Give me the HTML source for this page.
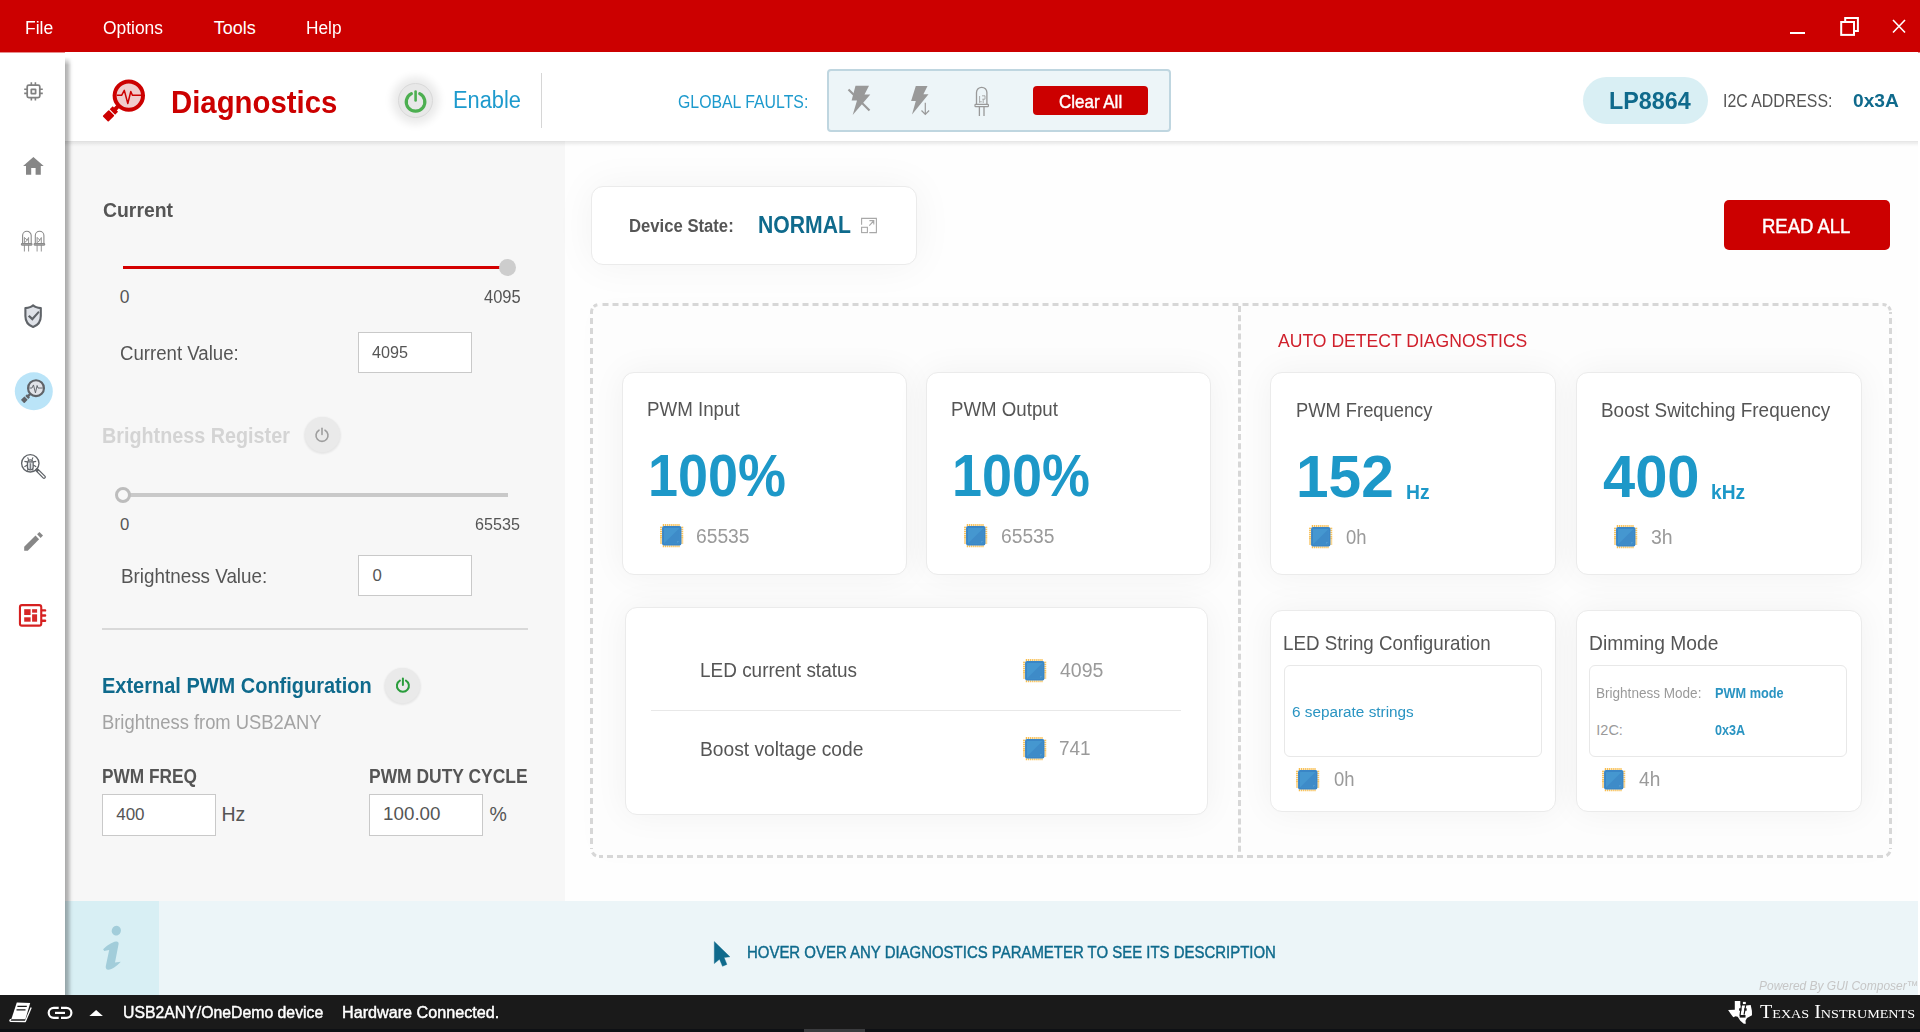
<!DOCTYPE html>
<html><head><meta charset="utf-8">
<title>Diagnostics</title>
<style>
html,body{margin:0;padding:0;width:1920px;height:1032px;overflow:hidden;background:#fff;font-family:"Liberation Sans",sans-serif;}
.a{position:absolute;box-sizing:border-box;}
.t{position:absolute;white-space:nowrap;transform-origin:0 0;font-family:"Liberation Sans",sans-serif;}
svg{position:absolute;overflow:visible;}
.card{position:absolute;box-sizing:border-box;background:#fff;border:1px solid #ebebeb;border-radius:12px;box-shadow:0 0 34px rgba(0,0,0,0.05);}
.inp{position:absolute;box-sizing:border-box;background:#fff;border:1px solid #c9c9c9;}
</style></head><body>
<!-- menu bar -->
<div class="a" style="left:0;top:0;width:1920px;height:52px;background:#cc0000"></div>
<div class="a" style="left:0;top:52px;width:1920px;height:1px;background:rgba(204,0,0,0.45)"></div>
<!-- window controls -->
<div class="a" style="left:1790px;top:32px;width:15px;height:2px;background:#fff"></div>
<svg style="left:0;top:0" width="1920" height="52">
 <path d="M1845.2 21V18.1H1857.9V30.9H1855" fill="none" stroke="#fff" stroke-width="2"/>
 <rect x="1841.2" y="22" width="12.8" height="12.9" fill="none" stroke="#fff" stroke-width="2"/>
 <path d="M1893 20L1905 32.5M1905 20L1893 32.5" stroke="#fff" stroke-width="1.6"/>
</svg>

<!-- header -->
<div class="a" style="left:65px;top:52px;width:1853px;height:89px;background:#fff"></div>
<!-- left panel -->
<div class="a" style="left:65px;top:141px;width:500px;height:760px;background:#f7f7f7"></div>
<!-- main area -->
<div class="a" style="left:565px;top:141px;width:1353px;height:760px;background:#fefefe"></div>
<!-- header shadow -->
<div class="a" style="left:65px;top:141px;width:1853px;height:7px;background:linear-gradient(rgba(0,0,0,.09) 0.5px,rgba(0,0,0,.065) 1.5px,rgba(0,0,0,.053) 2.5px,rgba(0,0,0,.033) 3.5px,rgba(0,0,0,.016) 4.5px,rgba(0,0,0,.004) 5.5px,rgba(0,0,0,0) 6.5px)"></div>

<!-- info bar -->
<div class="a" style="left:65px;top:901px;width:1853px;height:94px;background:#ecf5f8"></div>
<div class="a" style="left:65px;top:901px;width:94px;height:94px;background:#d8eff4"></div>
<svg style="left:0;top:0" width="200" height="1000">
 <ellipse cx="116.3" cy="930.7" rx="4.6" ry="4.9" transform="rotate(20 116.3 930.7)" fill="#a2cdda"/>
 <path d="M103.1 949.3C107 945.5 112 942 116 941.5C118 941.3 118.8 942.5 118.6 944L115 962.5L120.8 961.8C117 966 112 969.5 108.5 969.7C106 969.8 105.5 968 105.8 966L109.2 950C107.5 950.3 105.5 950.7 104.3 951Z" fill="#a2cdda"/>
</svg>
<!-- cursor -->
<svg style="left:0;top:0" width="800" height="1000">
 <path d="M714.3 941.6V963.6L719.5 959.2L722.5 966.3L726.9 964.4L724.1 957.6L729.9 956.8Z" fill="#0f6a8c" stroke="#0f6a8c" stroke-width="0.4" stroke-linejoin="round"/>
</svg>


<svg width="0" height="0" style="position:absolute">
 <defs>
  <symbol id="chip" viewBox="0 0 24 24">
   <path d="M3.4 0V2.4M3.4 21.6V24M0 3.4H2.4M21.6 3.4H24M5.4 0V2.4M5.4 21.6V24M0 5.4H2.4M21.6 5.4H24M7.4 0V2.4M7.4 21.6V24M0 7.4H2.4M21.6 7.4H24M9.4 0V2.4M9.4 21.6V24M0 9.4H2.4M21.6 9.4H24M11.4 0V2.4M11.4 21.6V24M0 11.4H2.4M21.6 11.4H24M13.4 0V2.4M13.4 21.6V24M0 13.4H2.4M21.6 13.4H24M15.4 0V2.4M15.4 21.6V24M0 15.4H2.4M21.6 15.4H24M17.4 0V2.4M17.4 21.6V24M0 17.4H2.4M21.6 17.4H24M19.4 0V2.4M19.4 21.6V24M0 19.4H2.4M21.6 19.4H24" stroke="#f6b02a" stroke-width="1.05"/>
   <rect x="2.1" y="2.1" width="19.8" height="19.8" rx="2" fill="#3a86c6"/>
   <rect x="4" y="4" width="16" height="16" rx="0.6" fill="#4597d0"/>
   <path d="M20 4V19.4Q20 20 19.4 20H4Z" fill="#3e8bc8"/>
   <path d="M17.6 18.6Q18.6 18.6 18.6 17.4" stroke="#6fb3de" stroke-width="0.6" fill="none"/>
  </symbol>
 </defs>
</svg>

<!-- ===== HEADER ===== -->
<!-- diagnostics icon -->
<svg style="left:0;top:0" width="200" height="140">
 <circle cx="128.8" cy="95.6" r="14.2" fill="#f0cccc" stroke="#cc0000" stroke-width="4"/>
 <path d="M116.7 95.3H121.6L124.3 90.4L127.8 103.5L130.8 91.5L132.4 95.3H141" fill="none" stroke="#cc0000" stroke-width="1.5" stroke-linejoin="round"/>
 <g transform="translate(128.8 95.6) rotate(135)" fill="#cc0000">
  <rect x="15" y="-2" width="5" height="4"/>
  <rect x="19" y="-3.8" width="4.2" height="7.6"/>
  <rect x="24.3" y="-4" width="8.8" height="8" rx="0.8"/>
 </g>
</svg>
<!-- enable power button -->
<div class="a" style="left:398px;top:83px;width:35px;height:35px;border-radius:50%;background:#e8e8e8;border:1px solid #d9d9d9;box-shadow:0 0 8px 6px rgba(0,0,0,0.085)"></div>
<svg style="left:0;top:0" width="600" height="140">
 <path d="M411.4 93.6A9.3 9.3 0 1 0 419.7 93.6" fill="none" stroke="#4caf50" stroke-width="3.2" stroke-linecap="round"/>
 <line x1="415.6" y1="91.5" x2="415.6" y2="100.5" stroke="#4caf50" stroke-width="2.6" stroke-linecap="round"/>
</svg>
<div class="a" style="left:540.5px;top:73px;width:1px;height:55px;background:#d6d6d6"></div>
<!-- faults box -->
<div class="a" style="left:827px;top:69px;width:344px;height:63px;border:2px solid #bfd6e0;border-radius:4px;background:#edf5f8"></div>
<svg style="left:0;top:0" width="1200" height="140">
 <path d="M855.5 85.8H869L864.5 94.5H870.3L852.7 115L857 100.5H851.6Z" fill="#999"/>
 <path d="M848.5 89.5L869.5 110.5" stroke="#999" stroke-width="2.1"/>
 <path d="M848.5 89.5L869.5 110.5" stroke="#edf5f8" stroke-width="0.01"/>
 <path d="M915.8 86H927.5L923.4 94.2H928.5L912 114.5L915.8 101H911.1Z" fill="#999"/>
 <path d="M925.3 102.8V114.3M921.5 110.5L925.3 114.3L929.1 110.5" fill="none" stroke="#999" stroke-width="1.2"/>
 <path d="M976.5 104.5V92.5A5.2 5.2 0 0 1 986.9 92.5V104.5" fill="none" stroke="#999" stroke-width="1.3"/>
 <rect x="975" y="104.4" width="13.4" height="2.3" rx="0.6" fill="none" stroke="#999" stroke-width="1.2"/>
 <path d="M979.4 106.5V116M984 106.5V116" stroke="#999" stroke-width="1.3"/>
 <path d="M979.6 96V102.8M979.6 101.8H981.8M982 95.8H985M985 95.8V99.2M985 99.2H982.4M983.2 99.2V103" fill="none" stroke="#999" stroke-width="0.8"/>
</svg>
<div class="a" style="left:1033px;top:86px;width:115px;height:29px;border-radius:4px;background:#cc0000"></div>
<!-- LP pill -->
<div class="a" style="left:1583px;top:77px;width:125px;height:47px;border-radius:24px;background:#d9eff4"></div>

<!-- ===== LEFT PANEL ===== -->
<div class="a" style="left:123px;top:266px;width:380px;height:3px;background:#d40000"></div>
<div class="a" style="left:499px;top:259px;width:17px;height:17px;border-radius:50%;background:#cdcdcd"></div>
<div class="inp" style="left:358px;top:332px;width:114px;height:41px"></div>
<!-- brightness power btn -->
<div class="a" style="left:304.5px;top:417px;width:35px;height:35px;border-radius:50%;background:#eaeaea;box-shadow:0 1px 2px 1px rgba(0,0,0,0.07)"></div>

<div class="a" style="left:123px;top:493px;width:385px;height:4px;background:#c9c9c9"></div>
<div class="a" style="left:114.8px;top:486.9px;width:16px;height:16px;border-radius:50%;background:#f7f7f7;border:3px solid #bdbdbd"></div>
<div class="inp" style="left:358px;top:555px;width:114px;height:41px"></div>
<div class="a" style="left:102px;top:628px;width:426px;height:2px;background:#d9d9d9"></div>
<div class="a" style="left:385.4px;top:667.7px;width:35px;height:35px;border-radius:50%;background:#eaeaea;box-shadow:0 1px 2px 1px rgba(0,0,0,0.07)"></div>
<svg style="left:0;top:0" width="600" height="900">
 <path d="M319 430.2A6 6 0 1 0 325 430.2" fill="none" stroke="#9e9e9e" stroke-width="1.6" stroke-linecap="round"/>
 <line x1="322" y1="428.2" x2="322" y2="434.5" stroke="#9e9e9e" stroke-width="1.6" stroke-linecap="round"/>
 <path d="M399.9 680.6A6 6 0 1 0 405.9 680.6" fill="none" stroke="#2a9d3c" stroke-width="2" stroke-linecap="round"/>
 <line x1="402.9" y1="678.6" x2="402.9" y2="685" stroke="#2a9d3c" stroke-width="2" stroke-linecap="round"/>
</svg>
<div class="inp" style="left:102px;top:794px;width:114px;height:42px"></div>
<div class="inp" style="left:369px;top:794px;width:114px;height:42px"></div>

<!-- ===== MAIN ===== -->
<div class="card" style="left:590.5px;top:186px;width:326px;height:79px;box-shadow:0 0 40px rgba(0,0,0,0.05)"></div>
<svg style="left:0;top:0" width="900" height="300">
 <path d="M861.6 224.7V218.4H876.4V232.6H869.3" fill="none" stroke="#a8a8a8" stroke-width="1.1"/>
 <rect x="861.6" y="227.3" width="5.8" height="5.3" fill="none" stroke="#a8a8a8" stroke-width="1.1"/>
 <path d="M869.3 225.6L873.6 221M869.4 220.6H873.8V224.6" fill="none" stroke="#a8a8a8" stroke-width="1.1"/>
</svg>
<div class="a" style="left:1724px;top:200px;width:166px;height:50px;border-radius:5px;background:#cc0000"></div>

<!-- dashed container -->
<div class="a" style="left:591px;top:304px;width:1300px;height:553px;border-radius:8px;background:#fdfdfd;box-shadow:0 0 30px rgba(0,0,0,0.012)"></div>
<svg style="left:0;top:0" width="1920" height="900">
 <g fill="none" stroke="#d7d7d7" stroke-width="3">
  <line x1="599" y1="304.5" x2="1883" y2="304.5" stroke-dasharray="6 4" stroke-dashoffset="-3.5"/>
  <line x1="599" y1="856.5" x2="1883" y2="856.5" stroke-dasharray="6 4" stroke-dashoffset="-8"/>
  <line x1="591.5" y1="312" x2="591.5" y2="849" stroke-dasharray="6 4" stroke-dashoffset="-6"/>
  <line x1="1890.5" y1="312" x2="1890.5" y2="849" stroke-dasharray="6 4" stroke-dashoffset="-6"/>
  <line x1="1239.5" y1="306" x2="1239.5" y2="857" stroke-dasharray="6 3.15"/>
  <path d="M591.5 312A7.5 7.5 0 0 1 599 304.5" stroke-dasharray="3.5 2.5 4 10"/>
  <path d="M1883 304.5A7.5 7.5 0 0 1 1890.5 312" stroke-dasharray="3.5 2.5 4 10"/>
  <path d="M1890.5 849A7.5 7.5 0 0 1 1883 856.5" stroke-dasharray="0 3 5 10"/>
  <path d="M599 856.5A7.5 7.5 0 0 1 591.5 849" stroke-dasharray="0 3 5 10"/>
 </g>
</svg>

<!-- cards -->
<div class="card" style="left:621.5px;top:371.5px;width:285px;height:203px"></div>
<div class="card" style="left:925.5px;top:371.5px;width:285.5px;height:203px"></div>
<div class="card" style="left:624.5px;top:606.5px;width:583px;height:208px"></div>
<div class="a" style="left:651px;top:710px;width:530px;height:1px;background:#e8e8e8"></div>
<div class="card" style="left:1269.5px;top:372px;width:286px;height:203px"></div>
<div class="card" style="left:1575.5px;top:372px;width:286px;height:203px"></div>
<div class="card" style="left:1269.5px;top:609.5px;width:286px;height:202.5px"></div>
<div class="card" style="left:1575.5px;top:609.5px;width:286px;height:202.5px"></div>
<div class="a" style="left:1284px;top:665px;width:258px;height:92px;border:1px solid #e8e8e8;border-radius:6px;background:#fff"></div>
<div class="a" style="left:1589px;top:665px;width:258px;height:92px;border:1px solid #e8e8e8;border-radius:6px;background:#fff"></div>

<!-- chip icons -->
<svg style="left:660px;top:524px" width="23.5" height="23.5"><use href="#chip"/></svg>
<svg style="left:964px;top:524px" width="23.5" height="23.5"><use href="#chip"/></svg>
<svg style="left:1023.3px;top:658.7px" width="23.5" height="23.5"><use href="#chip"/></svg>
<svg style="left:1023.3px;top:736.6px" width="23.5" height="23.5"><use href="#chip"/></svg>
<svg style="left:1309.2px;top:524.8px" width="23.5" height="23.5"><use href="#chip"/></svg>
<svg style="left:1614px;top:524.8px" width="23.5" height="23.5"><use href="#chip"/></svg>
<svg style="left:1296px;top:767.9px" width="23.5" height="23.5"><use href="#chip"/></svg>
<svg style="left:1602.3px;top:767.9px" width="23.5" height="23.5"><use href="#chip"/></svg>


<!-- ===== SIDEBAR ICONS ===== -->
<svg style="left:0;top:0" width="65" height="660">
 <!-- chip -->
 <g fill="none" stroke="#808080" stroke-width="1.75">
  <rect x="27.2" y="85.1" width="12.6" height="12.5" rx="1.6"/>
  <rect x="31.3" y="89.3" width="4.3" height="4.3" rx="0.3"/>
  <path d="M31.35 82.2V85M35.4 82.2V85M31.35 97.6V100.4M35.4 97.6V100.4M24.2 89.3H27.2M24.2 93.4H27.2M39.8 89.3H42.8M39.8 93.4H42.8" stroke-width="1.6"/>
 </g>
 <!-- home -->
 <path d="M31.2 174.8V168H35.6V174.8H40.8V166H43.7L33.4 157L23.1 166H26V174.8Z" fill="#868686"/>
 <!-- leds -->
 <g fill="none" stroke="#8a8a8a" stroke-width="1.1">
  <path d="M22.6 243.6V235.6A4.3 4.3 0 0 1 31.2 235.6V243.6"/>
  <rect x="21.4" y="243.6" width="10.6" height="1.5" rx="0.6" fill="#d6d6d6"/>
  <path d="M24.4 245V251.5M28.6 245V251.5M24.4 237.2V243.6M28.6 237.2V243.6M24.6 237.8L27.4 240.2L24.8 242.4M28.4 238L26.8 240.4" stroke-width="0.9"/>
  <path d="M35.3 243.6V235.6A4.3 4.3 0 0 1 43.9 235.6V243.6"/>
  <rect x="34.1" y="243.6" width="10.6" height="1.5" rx="0.6" fill="#d6d6d6"/>
  <path d="M37.1 245V251.5M41.3 245V251.5M37.1 237.2V243.6M41.3 237.2V243.6M37.3 237.8L40.1 240.2L37.5 242.4M41.1 238L39.5 240.4" stroke-width="0.9"/>
 </g>
 <!-- shield -->
 <path d="M33.1 305.3C31.5 307 28 307.9 25.4 308.1V316C25.4 321.5 28.8 325.5 33.1 327C37.4 325.5 40.8 321.5 40.8 316V308.1C38.2 307.9 34.7 307 33.1 305.3Z" fill="#dfe2e8" stroke="#5f6368" stroke-width="2.1" stroke-linejoin="round"/>
 <path d="M27.9 316.6L29.6 314.9L32.3 317.5L38.3 310.9L39.5 312.4L32.4 320.8Z" fill="#5f6368"/>
 <!-- active diag -->
 <circle cx="33.8" cy="391.3" r="19" fill="#bae4f8"/>
 <g transform="translate(36 388.2) scale(0.56) translate(-128.8 -95.6)">
  <circle cx="128.8" cy="95.6" r="14.2" fill="#e1e3e8" stroke="#5f6368" stroke-width="3.8"/>
  <path d="M116.7 95.3H121.6L124.3 89.8L127.8 104L130.8 90.8L132.4 95.3H141" fill="none" stroke="#5f6368" stroke-width="1.7" stroke-linejoin="round"/>
  <g transform="translate(128.8 95.6) rotate(135)" fill="#5f6368">
   <rect x="15" y="-2" width="5" height="4"/>
   <rect x="19" y="-3.8" width="4.2" height="7.6"/>
   <rect x="25" y="-4.2" width="8.8" height="8.4" rx="0.8"/>
  </g>
 </g>
 <!-- bug magnifier -->
 <g fill="none" stroke="#5f6368" stroke-width="1.2">
  <circle cx="30.3" cy="463.3" r="8.7" stroke-width="1.35"/>
  <path d="M37 470L44 477" stroke-width="3.8" stroke-linecap="round"/>
  <path d="M38.6 471.6L44 477" stroke="#fff" stroke-width="1.3" stroke-linecap="round"/>
  <path d="M27.4 461.8H33.2V467.3C33.2 468.9 32 469.9 30.3 469.9C28.6 469.9 27.4 468.9 27.4 467.3Z" fill="#dcdfe3"/>
  <path d="M28.1 461.3C28.1 459.4 32.5 459.4 32.5 461.3"/>
  <path d="M30.3 463.3V469.4" stroke-width="1"/>
  <path d="M27.4 461.9L24.4 461.4M33.2 461.9L36.2 461.4M27.4 465L24.4 466.8M33.2 465L36.2 466.8M28 469.2L27.4 470.8M32.6 469.2L33.2 470.8M28.6 459.8L27.6 457.4M32 459.8L33 457.4" stroke-width="1.1"/>
 </g>
 <!-- pencil -->
 <path d="M24.2 550.7V546.7L35.5 535.6L39.1 539.2L27.8 550.7Z" fill="#878787"/>
 <path d="M37.1 534.3L39.4 532L43 535.6L40.6 538Z" fill="#878787"/>
 <!-- red board -->
 <rect x="19.95" y="605.15" width="21.3" height="20.5" rx="2" fill="none" stroke="#d62020" stroke-width="2.1"/>
 <rect x="24.2" y="609.2" width="6.4" height="5.8" fill="#d62828"/>
 <rect x="24.2" y="617.3" width="6.4" height="4.4" fill="#d62828"/>
 <rect x="32.1" y="609.2" width="5" height="3.5" fill="#d62828"/>
 <rect x="32.1" y="614.3" width="5" height="7.4" fill="#d62828"/>
 <path d="M42 610.4H45.1M42 615.5H45.1M42 620.7H45.1" stroke="#d62020" stroke-width="2.4" stroke-linecap="round"/>
</svg>



<!-- sidebar shadow -->
<div class="a" style="left:65px;top:57px;width:10px;height:938px;background:linear-gradient(90deg,rgba(0,0,0,.30) 0.5px,rgba(0,0,0,.27) 1.5px,rgba(0,0,0,.25) 2.5px,rgba(0,0,0,.20) 3.5px,rgba(0,0,0,.14) 4.5px,rgba(0,0,0,.09) 5.5px,rgba(0,0,0,.035) 6.5px,rgba(0,0,0,.015) 7.5px,rgba(0,0,0,0) 9px);-webkit-mask-image:linear-gradient(rgba(0,0,0,0),#000 8px)"></div>

<!-- status bar -->
<div class="a" style="left:0;top:995px;width:1920px;height:37px;background:#1a1a1a"></div>
<div class="a" style="left:0;top:1029px;width:1920px;height:3px;background:#0e1014"></div>
<div class="a" style="left:804px;top:1029px;width:61px;height:3px;background:#3a3b3e"></div>
<!-- ===== STATUS BAR ICONS ===== -->
<svg style="left:0;top:0" width="120" height="1032">
 <path d="M16.8 1002.6L30.2 1002.9L25.4 1019.3L11.3 1019.3Z" fill="#fff"/>
 <path d="M11.3 1019.3C9.6 1019.6 9.5 1021.2 10.8 1021.3L25.3 1021.5L31.2 1007.6" fill="none" stroke="#fff" stroke-width="1.3" stroke-linejoin="round"/>
 <path d="M17.4 1006.3H26.8M16.5 1009.9H25.5" stroke="#1a1a1a" stroke-width="1.2"/>
 <path d="M58.7 1007.8H53.75A5.05 5.05 0 0 0 53.75 1017.9H58.7M61 1007.8H66.35A5.05 5.05 0 0 1 66.35 1017.9H61" fill="none" stroke="#fff" stroke-width="2.2"/>
 <path d="M55 1012.9H65" stroke="#fff" stroke-width="2.2"/>
 <path d="M89.4 1016.1L96.1 1009.9L102.9 1016.1Z" fill="#fff"/>
</svg>
<!-- TI logo -->
<svg style="left:0;top:0" width="1920" height="1032">
 <path d="M1734.8 1000.9H1740.3V1005.4L1746 1005.4L1750.7 1005.1L1751.9 1010.7L1752 1015.3L1747 1017.9L1745.5 1020.8L1745.8 1023.7L1743.8 1023.7L1740.3 1020.8L1737.7 1016.8L1735.6 1016.2L1733.3 1017.3L1731 1014.2L1728.1 1010.1L1734.8 1009.8Z" fill="#fff"/>
 <rect x="1742.9" y="1001.9" width="2.9" height="2.2" fill="#fff"/>
 <path d="M1741.5 1004.6L1740 1015.6M1745.7 1005.2L1744.1 1014.6" stroke="#1a1a1a" stroke-width="1.2"/>
 <rect x="1739.1" y="1008.3" width="2.3" height="2.4" fill="#1a1a1a"/>
 <rect x="1744.3" y="1008.3" width="2.4" height="2.4" fill="#1a1a1a"/>
 <rect x="1739.7" y="1015" width="5.8" height="2.6" fill="#1a1a1a"/>
</svg>
<span class="t" style="left:1760px;top:1003px;font-family:'Liberation Serif',serif;color:#fff;font-size:18.5px;line-height:18px;font-variant:small-caps;letter-spacing:0px;transform:scaleX(1.086);white-space:nowrap">Texas Instruments</span>

<span class="t" style="left:24.83px;top:18.86px;font-size:18.0px;line-height:18.0px;font-weight:400;color:#ffffff;transform:scaleX(0.9717);">File</span>
<span class="t" style="left:103.40px;top:18.86px;font-size:18.0px;line-height:18.0px;font-weight:400;color:#ffffff;transform:scaleX(0.9672);">Options</span>
<span class="t" style="left:213.70px;top:18.86px;font-size:18.0px;line-height:18.0px;font-weight:400;color:#ffffff;">Tools</span>
<span class="t" style="left:305.74px;top:18.86px;font-size:18.0px;line-height:18.0px;font-weight:400;color:#ffffff;transform:scaleX(0.9581);">Help</span>
<span class="t" style="left:170.71px;top:86.65px;font-size:31.0px;line-height:31.0px;font-weight:700;color:#cc0000;transform:scaleX(0.9463);">Diagnostics</span>
<span class="t" style="left:452.74px;top:88.44px;font-size:24.75px;line-height:24.75px;font-weight:400;color:#1d9acd;transform:scaleX(0.8815);">Enable</span>
<span class="t" style="left:677.50px;top:92.65px;font-size:18.25px;line-height:18.25px;font-weight:400;color:#1d9acd;transform:scaleX(0.8683);">GLOBAL FAULTS:</span>
<span class="t" style="left:1058.90px;top:91.71px;font-size:19.0px;line-height:19.0px;font-weight:400;color:#ffffff;-webkit-text-stroke:0.45px #ffffff;transform:scaleX(0.8927);">Clear All</span>
<span class="t" style="left:1608.72px;top:88.59px;font-size:23.75px;line-height:23.75px;font-weight:700;color:#0f6a8c;transform:scaleX(0.9822);">LP8864</span>
<span class="t" style="left:1723.14px;top:92.24px;font-size:18.5px;line-height:18.5px;font-weight:400;color:#555555;transform:scaleX(0.8586);">I2C ADDRESS:</span>
<span class="t" style="left:1852.50px;top:92.24px;font-size:18.5px;line-height:18.5px;font-weight:700;color:#0f6a8c;transform:scaleX(1.0372);">0x3A</span>
<span class="t" style="left:102.60px;top:200.07px;font-size:20.0px;line-height:20.0px;font-weight:700;color:#555555;transform:scaleX(0.9701);">Current</span>
<span class="t" style="left:119.80px;top:289.28px;font-size:17.5px;line-height:17.5px;font-weight:400;color:#555555;">0</span>
<span class="t" style="left:483.70px;top:289.28px;font-size:17.5px;line-height:17.5px;font-weight:400;color:#555555;transform:scaleX(0.9425);">4095</span>
<span class="t" style="left:120.47px;top:343.27px;font-size:20.0px;line-height:20.0px;font-weight:400;color:#555555;transform:scaleX(0.9318);">Current Value:</span>
<span class="t" style="left:372.30px;top:344.92px;font-size:16.75px;line-height:16.75px;font-weight:400;color:#555555;transform:scaleX(0.9663);">4095</span>
<span class="t" style="left:101.98px;top:425.90px;font-size:21.5px;line-height:21.5px;font-weight:700;color:#d4d4d4;transform:scaleX(0.9194);">Brightness Register</span>
<span class="t" style="left:120.00px;top:516.92px;font-size:16.75px;line-height:16.75px;font-weight:400;color:#555555;">0</span>
<span class="t" style="left:475.00px;top:516.92px;font-size:16.75px;line-height:16.75px;font-weight:400;color:#555555;transform:scaleX(0.9641);">65535</span>
<span class="t" style="left:120.70px;top:564.62px;font-size:21.0px;line-height:21.0px;font-weight:400;color:#555555;transform:scaleX(0.8970);">Brightness Value:</span>
<span class="t" style="left:372.40px;top:567.92px;font-size:16.75px;line-height:16.75px;font-weight:400;color:#555555;">0</span>
<span class="t" style="left:102.00px;top:675.36px;font-size:22.25px;line-height:22.25px;font-weight:700;color:#0f6a8c;transform:scaleX(0.8980);">External PWM Configuration</span>
<span class="t" style="left:101.96px;top:713.49px;font-size:19.5px;line-height:19.5px;font-weight:400;color:#a3a3a3;transform:scaleX(0.9423);">Brightness from USB2ANY</span>
<span class="t" style="left:102.03px;top:767.38px;font-size:19.75px;line-height:19.75px;font-weight:700;color:#555555;transform:scaleX(0.8736);">PWM FREQ</span>
<span class="t" style="left:369.12px;top:767.38px;font-size:19.75px;line-height:19.75px;font-weight:700;color:#555555;transform:scaleX(0.8827);">PWM DUTY CYCLE</span>
<span class="t" style="left:116.20px;top:805.61px;font-size:17.0px;line-height:17.0px;font-weight:400;color:#555555;">400</span>
<span class="t" style="left:221.40px;top:805.49px;font-size:19.5px;line-height:19.5px;font-weight:400;color:#555555;">Hz</span>
<span class="t" style="left:383.10px;top:805.22px;font-size:18.75px;line-height:18.75px;font-weight:400;color:#555555;">100.00</span>
<span class="t" style="left:489.60px;top:805.49px;font-size:19.5px;line-height:19.5px;font-weight:400;color:#555555;">%</span>
<span class="t" style="left:628.73px;top:215.70px;font-size:19.25px;line-height:19.25px;font-weight:700;color:#555555;transform:scaleX(0.8659);">Device State:</span>
<span class="t" style="left:757.74px;top:212.64px;font-size:24.75px;line-height:24.75px;font-weight:700;color:#0f6a8c;transform:scaleX(0.8559);">NORMAL</span>
<span class="t" style="left:1762.08px;top:215.87px;font-size:20.0px;line-height:20.0px;font-weight:400;color:#ffffff;-webkit-text-stroke:0.45px #ffffff;transform:scaleX(0.9238);">READ ALL</span>
<span class="t" style="left:647.38px;top:399.05px;font-size:20.25px;line-height:20.25px;font-weight:400;color:#555555;transform:scaleX(0.9244);">PWM Input</span>
<span class="t" style="left:648.46px;top:447.35px;font-size:59.0px;line-height:59.0px;font-weight:700;color:#1d98c8;transform:scaleX(0.9137);">100%</span>
<span class="t" style="left:695.94px;top:525.77px;font-size:20.0px;line-height:20.0px;font-weight:400;color:#9a9a9a;transform:scaleX(0.9616);">65535</span>
<span class="t" style="left:951.48px;top:399.05px;font-size:20.25px;line-height:20.25px;font-weight:400;color:#555555;transform:scaleX(0.9221);">PWM Output</span>
<span class="t" style="left:952.36px;top:447.35px;font-size:59.0px;line-height:59.0px;font-weight:700;color:#1d98c8;transform:scaleX(0.9137);">100%</span>
<span class="t" style="left:1000.54px;top:525.77px;font-size:20.0px;line-height:20.0px;font-weight:400;color:#9a9a9a;transform:scaleX(0.9616);">65535</span>
<span class="t" style="left:699.89px;top:660.03px;font-size:20.75px;line-height:20.75px;font-weight:400;color:#555555;transform:scaleX(0.9134);">LED current status</span>
<span class="t" style="left:1059.80px;top:660.03px;font-size:20.75px;line-height:20.75px;font-weight:400;color:#9a9a9a;transform:scaleX(0.9404);">4095</span>
<span class="t" style="left:699.87px;top:738.53px;font-size:20.75px;line-height:20.75px;font-weight:400;color:#555555;transform:scaleX(0.9259);">Boost voltage code</span>
<span class="t" style="left:1058.89px;top:737.83px;font-size:20.75px;line-height:20.75px;font-weight:400;color:#9a9a9a;transform:scaleX(0.9129);">741</span>
<span class="t" style="left:1277.80px;top:331.41px;font-size:19.0px;line-height:19.0px;font-weight:400;color:#d0202c;transform:scaleX(0.9249);">AUTO DETECT DIAGNOSTICS</span>
<span class="t" style="left:1296.20px;top:400.15px;font-size:20.25px;line-height:20.25px;font-weight:400;color:#555555;transform:scaleX(0.9047);">PWM Frequency</span>
<span class="t" style="left:1296.22px;top:448.35px;font-size:59.0px;line-height:59.0px;font-weight:700;color:#1d98c8;transform:scaleX(0.9933);">152</span>
<span class="t" style="left:1406.05px;top:481.55px;font-size:20.25px;line-height:20.25px;font-weight:700;color:#1d98c8;transform:scaleX(0.9524);">Hz</span>
<span class="t" style="left:1345.80px;top:528.28px;font-size:19.75px;line-height:19.75px;font-weight:400;color:#9a9a9a;transform:scaleX(0.9340);">0h</span>
<span class="t" style="left:1601.47px;top:400.05px;font-size:20.25px;line-height:20.25px;font-weight:400;color:#555555;transform:scaleX(0.9337);">Boost Switching Frequency</span>
<span class="t" style="left:1603.30px;top:448.35px;font-size:59.0px;line-height:59.0px;font-weight:700;color:#1d98c8;transform:scaleX(0.9801);">400</span>
<span class="t" style="left:1711.05px;top:481.95px;font-size:20.25px;line-height:20.25px;font-weight:700;color:#1d98c8;transform:scaleX(0.9459);">kHz</span>
<span class="t" style="left:1650.80px;top:528.28px;font-size:19.75px;line-height:19.75px;font-weight:400;color:#9a9a9a;transform:scaleX(0.9865);">3h</span>
<span class="t" style="left:1283.47px;top:633.35px;font-size:20.25px;line-height:20.25px;font-weight:400;color:#555555;transform:scaleX(0.9272);">LED String Configuration</span>
<span class="t" style="left:1292.30px;top:703.98px;font-size:15.5px;line-height:15.5px;font-weight:400;color:#2a94c2;transform:scaleX(0.9882);">6 separate strings</span>
<span class="t" style="left:1333.70px;top:769.78px;font-size:19.75px;line-height:19.75px;font-weight:400;color:#9a9a9a;transform:scaleX(0.9340);">0h</span>
<span class="t" style="left:1589.05px;top:633.35px;font-size:20.25px;line-height:20.25px;font-weight:400;color:#555555;transform:scaleX(0.9503);">Dimming Mode</span>
<span class="t" style="left:1596.37px;top:685.72px;font-size:14.5px;line-height:14.5px;font-weight:400;color:#9a9a9a;transform:scaleX(0.9341);">Brightness Mode:</span>
<span class="t" style="left:1715.00px;top:685.72px;font-size:14.5px;line-height:14.5px;font-weight:700;color:#2a94c2;transform:scaleX(0.8787);">PWM mode</span>
<span class="t" style="left:1596.30px;top:722.92px;font-size:14.5px;line-height:14.5px;font-weight:400;color:#9a9a9a;">I2C:</span>
<span class="t" style="left:1715.00px;top:722.92px;font-size:14.5px;line-height:14.5px;font-weight:700;color:#2a94c2;transform:scaleX(0.8667);">0x3A</span>
<span class="t" style="left:1638.70px;top:769.78px;font-size:19.75px;line-height:19.75px;font-weight:400;color:#9a9a9a;transform:scaleX(0.9674);">4h</span>
<span class="t" style="left:747.23px;top:943.89px;font-size:17.25px;line-height:17.25px;font-weight:400;color:#0f6a8c;-webkit-text-stroke:0.45px #0f6a8c;transform:scaleX(0.8667);">HOVER OVER ANY DIAGNOSTICS PARAMETER TO SEE ITS DESCRIPTION</span>
<span class="t" style="left:1759.00px;top:979.80px;font-size:12.75px;line-height:12.75px;font-weight:400;color:#c6c6c6;font-style:italic;transform:scaleX(0.9388);">Powered By GUI Composer™</span>
<span class="t" style="left:123.06px;top:1004.72px;font-size:16.75px;line-height:16.75px;font-weight:400;color:#ffffff;-webkit-text-stroke:0.45px #ffffff;transform:scaleX(0.9434);">USB2ANY/OneDemo device</span>
<span class="t" style="left:341.63px;top:1004.72px;font-size:16.75px;line-height:16.75px;font-weight:400;color:#ffffff;-webkit-text-stroke:0.45px #ffffff;transform:scaleX(0.9654);">Hardware Connected.</span>
</body></html>
